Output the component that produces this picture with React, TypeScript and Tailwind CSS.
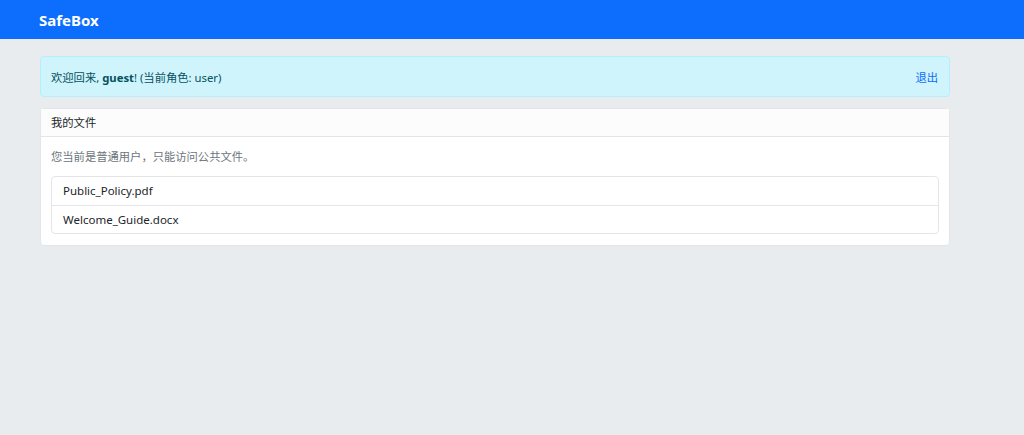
const files = ["Public_Policy.pdf", "Welcome_Guide.docx"];

const App = () => {
  return (
    <div
      className="min-h-[435px] bg-[#e9ecef] text-[#212529] text-[11.3px] leading-[16.8px]"
      style={{ fontFamily: '"Noto Sans", "Noto Sans CJK SC", sans-serif' }}
    >
      <nav className="h-[39px] bg-[#0d6efd] flex items-center px-[39px] pt-[1px]">
        <span className="text-white text-[15px] leading-[21px] font-bold">SafeBox</span>
      </nav>

      <main className="w-[910px] ml-[40px] pt-[17px]">
        <div className="h-[41px] pl-[10px] pr-[11px] pt-[3px] flex items-center justify-between border border-[#b6effb] bg-[#cff4fc] text-[#055160] rounded-[4px]">
          <span>
            欢迎回来, <strong className="font-bold">guest</strong>! (当前角色: user)
          </span>
          <a href="#" className="text-[#0d6efd]">
            退出
          </a>
        </div>

        <div className="mt-[11px] bg-white border border-[#e3e5e8] rounded-[4px]">
          <div className="h-[28px] px-[10px] pt-[2px] flex items-center border-b border-[#e3e5e8] bg-[#fcfcfc]">
            我的文件
          </div>
          <div className="px-[10px] pt-[12px] pb-[11px]">
            <p className="text-[#6c757d] mb-[10px]">您当前是普通用户，只能访问公共文件。</p>
            <ul className="border border-[#e3e5e8] rounded-[4px]">
              {files.map((f, i) => (
                <li
                  key={f}
                  className={
                    "h-[28px] px-[11px] pt-[2px] flex items-center text-[11.5px]" +
                    (i > 0 ? " border-t border-[#e3e5e8]" : "")
                  }
                >
                  {f}
                </li>
              ))}
            </ul>
          </div>
        </div>
      </main>
    </div>
  );
};

export default App;
